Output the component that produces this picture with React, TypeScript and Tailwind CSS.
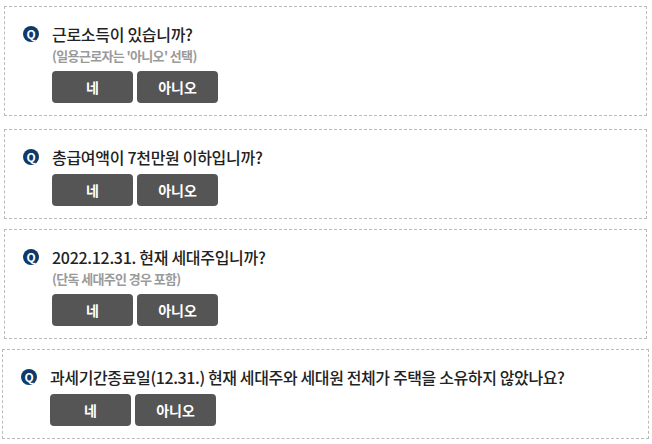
import React from "react";

const font = { fontFamily: '"Noto Sans CJK KR", "Noto Sans", sans-serif' };

function QBadge() {
  return (
    <span className="flex h-[16px] w-[16px] shrink-0 items-center justify-center rounded-full bg-[#0e3a6a] text-[12px] font-bold leading-none text-white">
      Q
    </span>
  );
}

function Buttons() {
  return (
    <div className="mt-[5px] flex gap-[4px] pl-[29px]">
      <button className="h-[32px] w-[81px] rounded-[4px] bg-[#555555] text-[14px] font-bold text-white">네</button>
      <button className="h-[32px] w-[81px] rounded-[4px] bg-[#555555] text-[14px] font-bold text-white">아니오</button>
    </div>
  );
}

function Box({ title, sub, className, titleClass }: { title: string; sub?: string; className: string; titleClass?: string }) {
  return (
    <div className={"border border-dashed border-[#bbbbbb] pl-[18px] pt-[15px] pb-[12px] " + className}>
      <div className="flex h-[24px] items-center gap-[13px]">
        <QBadge />
        <span className={"whitespace-nowrap text-[16px] font-medium leading-[24px] text-[#222222] " + (titleClass ?? "tracking-[-0.3px]")}>{title}</span>
      </div>
      {sub && (
        <div className="pl-[29px] text-[13px] font-bold leading-[20px] tracking-[-0.65px] text-[#9a9a9a]">{sub}</div>
      )}
      <Buttons />
    </div>
  );
}

export default function App() {
  return (
    <div className="h-[444px] w-[652px] bg-white pt-[6px]" style={font}>
      <Box className="ml-[4px] w-[643px]" title="근로소득이 있습니까?" sub="(일용근로자는 '아니오' 선택)" />
      <Box className="ml-[4px] mt-[13px] w-[643px]" title="총급여액이 7천만원 이하입니까?" />
      <Box className="ml-[4px] mt-[10px] w-[643px]" title="2022.12.31. 현재 세대주입니까?" sub="(단독 세대주인 경우 포함)" />
      <Box
        className="ml-[2px] mt-[10px] w-[647px]"
        title="과세기간종료일(12.31.) 현재 세대주와 세대원 전체가 주택을 소유하지 않았나요?"
        titleClass="tracking-[-0.38px]"
      />
    </div>
  );
}
